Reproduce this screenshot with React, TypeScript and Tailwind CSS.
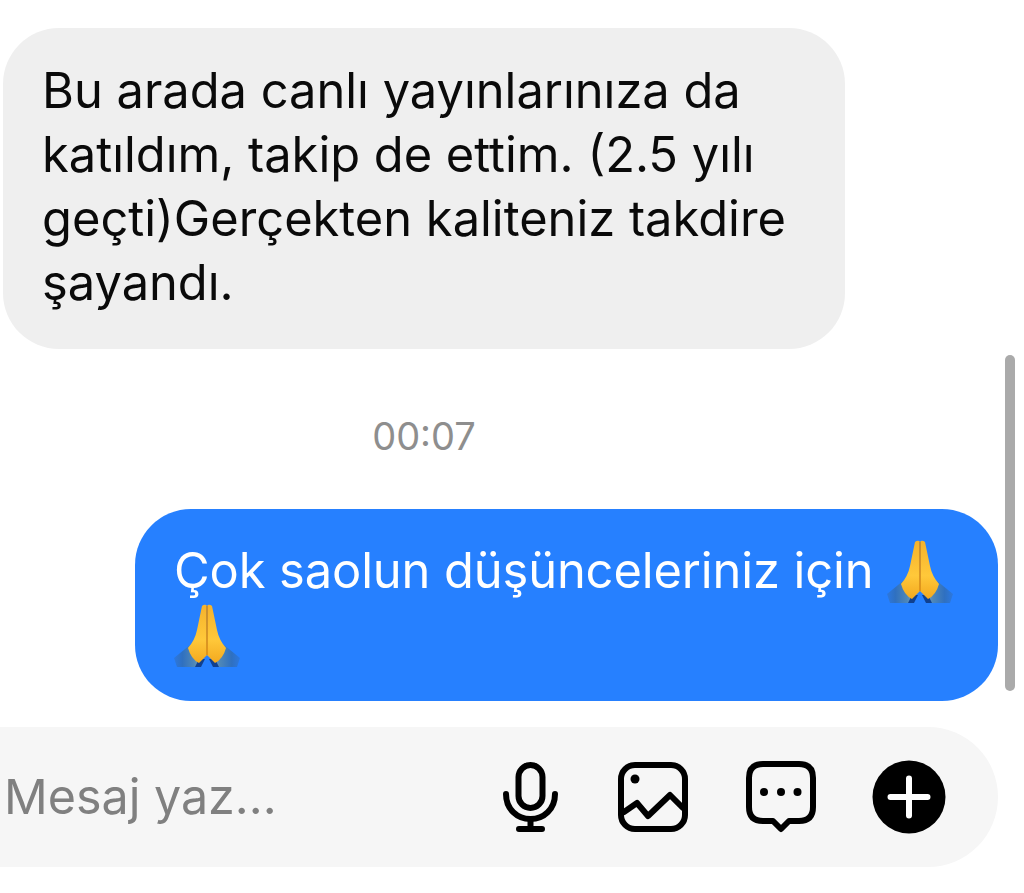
function PrayEmoji() {
  return (
    <svg width="66" height="63" viewBox="0 0 66 63" className="inline-block align-[-15px]">
      <defs>
        <linearGradient id="sleeveLeft" x1="0" y1="0" x2="1" y2="0">
          <stop offset="0" stopColor="#2c78e0" />
          <stop offset="0.3" stopColor="#2f70c0" />
          <stop offset="0.7" stopColor="#4d86b8" />
          <stop offset="1" stopColor="#74a0c0" />
        </linearGradient>
        <linearGradient id="sleeveRight" x1="1" y1="0" x2="0" y2="0">
          <stop offset="0" stopColor="#2c78e0" />
          <stop offset="0.3" stopColor="#2f70c0" />
          <stop offset="0.7" stopColor="#4d86b8" />
          <stop offset="1" stopColor="#74a0c0" />
        </linearGradient>
        <linearGradient id="hand" x1="0" y1="0" x2="0" y2="1">
          <stop offset="0" stopColor="#f5b22c" />
          <stop offset="0.6" stopColor="#ffc83a" />
          <stop offset="1" stopColor="#f3a91f" />
        </linearGradient>
      </defs>
      <path d="M0 54 L16 41 L28 54 L23 63 L3 63 Z" fill="url(#sleeveLeft)" />
      <path d="M66 54 L50 41 L38 54 L43 63 L63 63 Z" fill="url(#sleeveRight)" />
      <path d="M21 63 L25 55 L31 55 L27 63 Z" fill="#10408f" />
      <path d="M45 63 L41 55 L35 55 L39 63 Z" fill="#10408f" />
      <path d="M28 2 Q30 0 32.5 1 L33 51 L25 59 Q17 55 14 44 Q21 36 23 26 Z" fill="url(#hand)" />
      <path d="M38 2 Q36 0 33.5 1 L33 51 L41 59 Q49 55 52 44 Q45 36 43 26 Z" fill="url(#hand)" />
      <path d="M33 2 V51" stroke="#d98a14" strokeWidth="1.5" fill="none" />
    </svg>
  );
}

function MicIcon() {
  return (
    <svg width="55" height="70" viewBox="0 0 55 70" fill="none" stroke="#000" strokeWidth="6" strokeLinecap="round">
      <rect x="15.5" y="3" width="24" height="43" rx="12" />
      <path d="M3 32 C3 47 14 57 27.5 57 C41 57 52 47 52 32" />
      <path d="M27.5 57 V66 M16 67 H39" />
    </svg>
  );
}

function ImageIcon() {
  return (
    <svg width="70" height="70" viewBox="0 0 70 70" fill="none" stroke="#000" strokeWidth="6" strokeLinecap="round" strokeLinejoin="round">
      <rect x="3" y="3" width="64" height="64" rx="14" />
      <circle cx="17" cy="17" r="4.5" fill="#000" stroke="none" />
      <path d="M6 50 L19 41 L30 54 L52 33 L65 46" />
    </svg>
  );
}

function ChatIcon() {
  return (
    <svg width="70" height="72" viewBox="0 0 70 72" fill="none" stroke="#000" strokeWidth="6" strokeLinejoin="round">
      <path d="M17 3 H53 Q67 3 67 17 V46 Q67 60 53 60 H43 L35 68 L27 60 H17 Q3 60 3 46 V17 Q3 3 17 3 Z" />
      <circle cx="18" cy="31" r="4" fill="#000" stroke="none" />
      <circle cx="35" cy="31" r="4" fill="#000" stroke="none" />
      <circle cx="51.5" cy="31" r="4" fill="#000" stroke="none" />
    </svg>
  );
}

function PlusIcon() {
  return (
    <svg width="74" height="74" viewBox="0 0 74 74" fill="none">
      <circle cx="37" cy="37" r="36.5" fill="#000" />
      <path d="M18.5 37 H55.5 M37 18.5 V55.5" stroke="#fff" strokeWidth="6" strokeLinecap="round" />
    </svg>
  );
}

export default function App() {
  return (
    <div className="relative w-[1024px] h-[893px] overflow-hidden bg-white font-['Inter',sans-serif] text-[48.8px] leading-[64px]">
      <div className="pt-[28px] flex flex-col">
        <div className="ml-[3px] w-[842px] h-[321px] rounded-[56px] bg-[#efefef] pl-[39px] pr-[40px] pt-[31px] text-[#0a0a0a]">
          Bu arada canlı yayınlarınıza da katıldım, takip de ettim. (2.5 yılı geçti)Gerçekten kaliteniz takdire şayandı.
        </div>

        <div className="w-[848px] mt-[63px] text-center text-[38px] leading-[48px] text-[#8e8e8e]">00:07</div>

        <div className="ml-[135px] mt-[49px] w-[863px] h-[192px] rounded-[56px] bg-[#2680ff] pl-[39px] pr-[40px] pt-[30px] text-white">
          <span className="tracking-[-0.1px]">Çok saolun düşünceleriniz için</span> <PrayEmoji /> <PrayEmoji />
        </div>

        <div className="mt-[26px] w-[998px] h-[140px] rounded-r-[70px] bg-[#f6f6f6] flex items-center pl-[4px]">
          <span className="text-[48.4px] text-[#808080]">Mesaj yaz...</span>
          <div className="ml-auto mr-[52px] flex items-center">
            <MicIcon />
            <div className="ml-[60px]"><ImageIcon /></div>
            <div className="ml-[58px]"><ChatIcon /></div>
            <div className="ml-[56px]"><PlusIcon /></div>
          </div>
        </div>
      </div>

      <div className="absolute left-[1005px] top-[355px] w-[10px] h-[336px] rounded-full bg-[#aaaaaa]" />
    </div>
  );
}
